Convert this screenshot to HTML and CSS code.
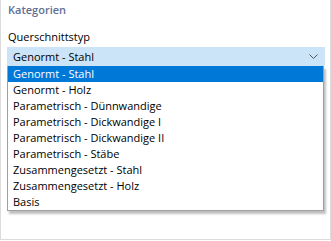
FILE: index.html
```html
<!DOCTYPE html>
<html lang="de">
<head>
    <meta charset="UTF-8">
    <title>Kategorien</title>
    <link rel="stylesheet" href="styles.css">
</head>
<body>
    <div class="panel">
        <h2 class="heading">Kategorien</h2>
        <div class="field">
            <label class="label">Querschnittstyp</label>
            <div class="combo">
                <span class="combo-value">Genormt - Stahl</span>
                <svg class="chevron" width="9" height="5" viewBox="0 0 9 5">
                    <path d="M0.5 0.5 L4.5 4.5 L8.5 0.5" fill="none" stroke="#555" stroke-width="1"/>
                </svg>
                <ul class="dropdown">
                    <li class="option selected">Genormt - Stahl</li>
                    <li class="option">Genormt - Holz</li>
                    <li class="option">Parametrisch - Dünnwandige</li>
                    <li class="option">Parametrisch - Dickwandige I</li>
                    <li class="option">Parametrisch - Dickwandige II</li>
                    <li class="option">Parametrisch - Stäbe</li>
                    <li class="option">Zusammengesetzt - Stahl</li>
                    <li class="option">Zusammengesetzt - Holz</li>
                    <li class="option">Basis</li>
                </ul>
            </div>
        </div>
    </div>
</body>
</html>
```

FILE: styles.css
```css
* {
    margin: 0;
    padding: 0;
    box-sizing: border-box;
}

body {
    background: #ffffff;
    font-family: 'Open Sans', 'Noto Sans', sans-serif;
    font-size: 11px;
    color: #000000;
}

.panel {
    width: 331px;
    height: 240px;
    border: 1px solid #dcdcdc;
    border-top: none;
    padding: 2px 5px 0 6px;
}

.heading {
    font-size: 11px;
    font-weight: 600;
    color: #5f6f94;
    line-height: 16px;
    padding-left: 1px;
}

.field {
    margin-top: 11px;
}

.label {
    display: block;
    line-height: 16px;
    padding-left: 1px;
}

.combo {
    position: relative;
    margin-top: 2px;
    height: 19px;
    background: #cce4f7;
    display: flex;
    align-items: center;
    justify-content: space-between;
    padding: 0 7px 0 6px;
}

.combo-value {
    line-height: 19px;
}

.chevron {
    display: block;
}

.dropdown {
    position: absolute;
    left: 0;
    right: 1px;
    top: 19px;
    list-style: none;
    background: #ffffff;
    border: 1px solid #a0a0a0;
    border-top: none;
    box-shadow: 2px 3px 2px rgba(0, 0, 0, 0.25);
}

.option {
    height: 16px;
    line-height: 16px;
    padding-left: 5px;
}

.option.selected {
    background: #0078d7;
    color: #ffffff;
}
```
